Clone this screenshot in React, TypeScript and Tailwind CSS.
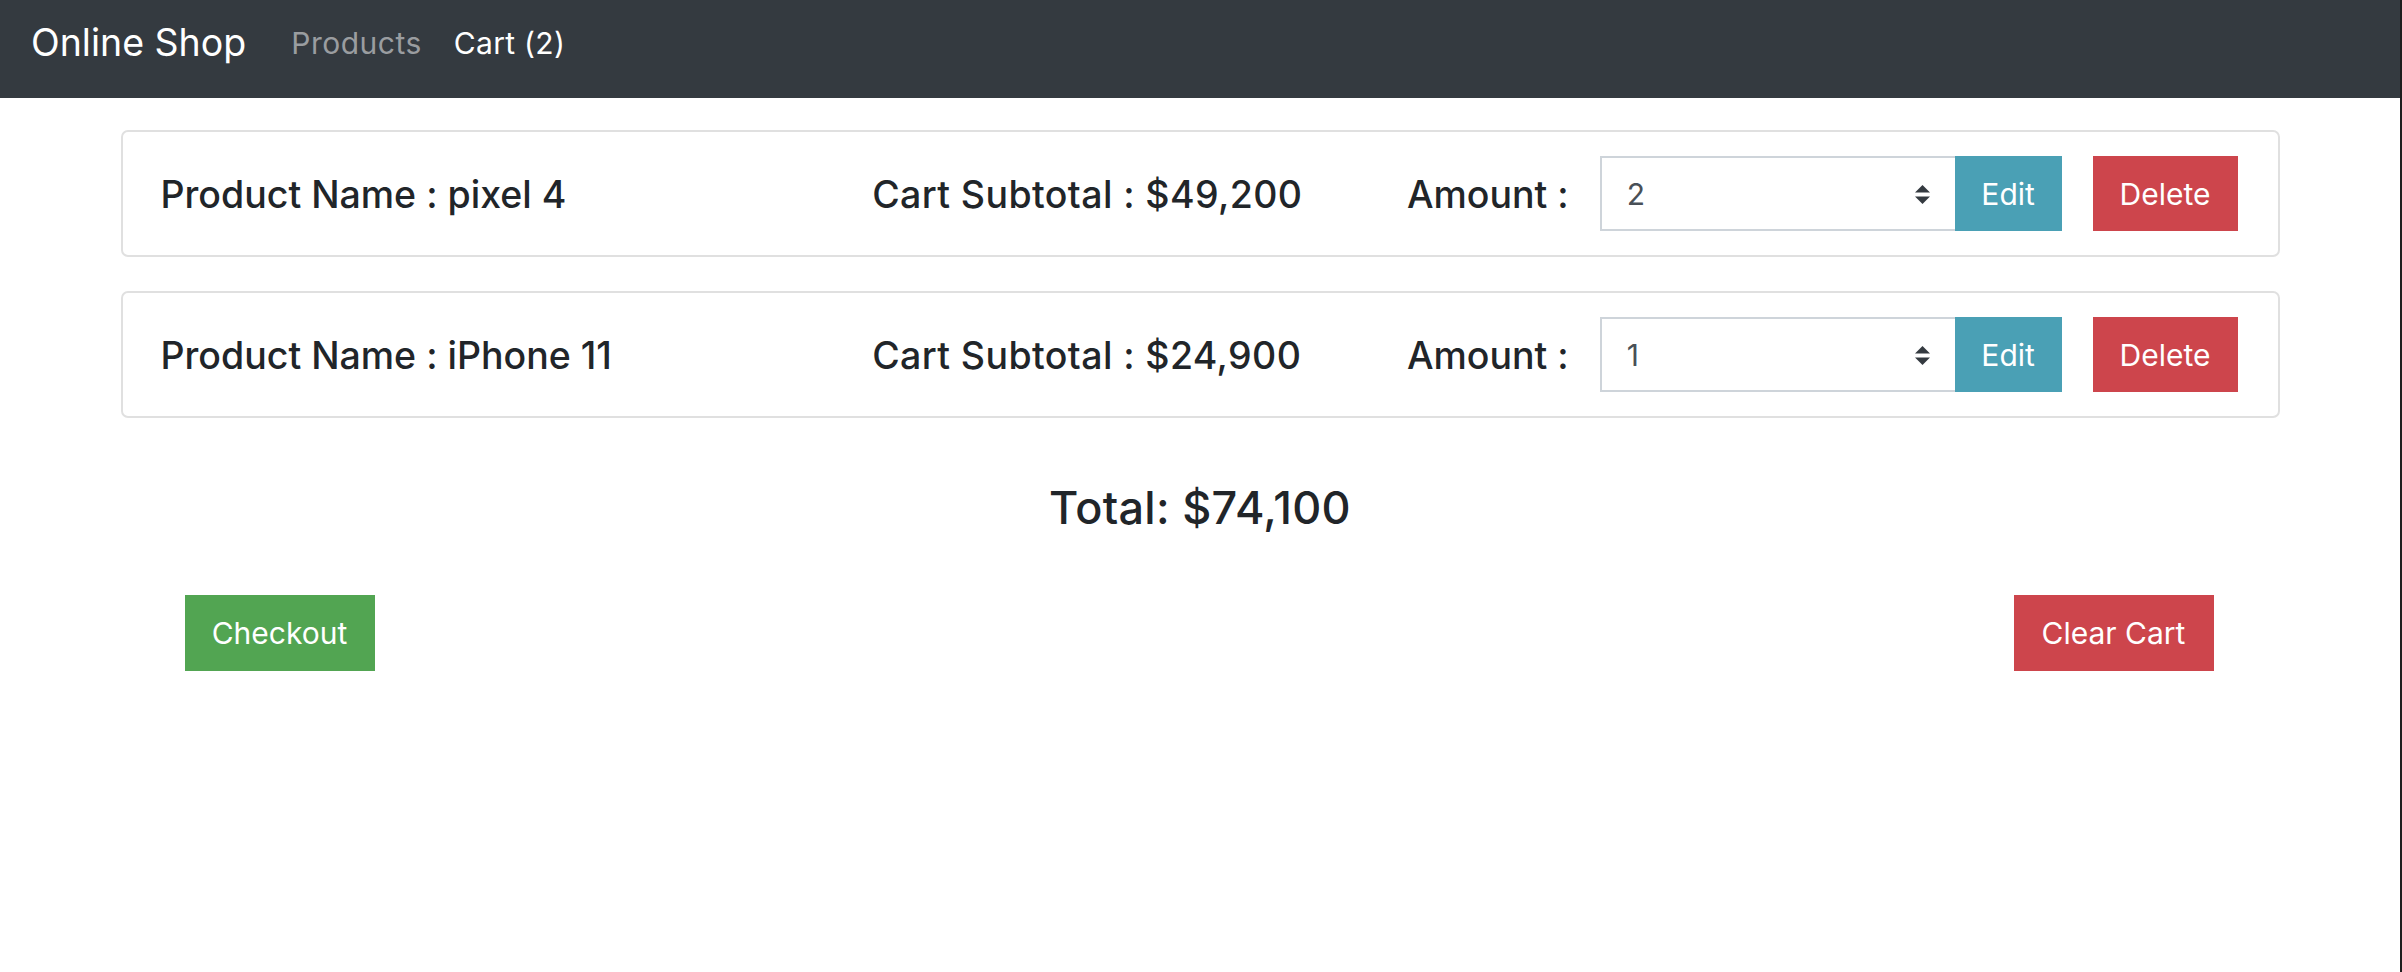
const items = [
  { name: "pixel 4", subtotal: "$49,200", amount: 2 },
  { name: "iPhone 11", subtotal: "$24,900", amount: 1 },
];

const SortArrows = () => (
  <svg width="17" height="19" viewBox="0 0 17 19" className="shrink-0">
    <path d="M8.5 0 L16 7.5 H1 Z" fill="#343a40" />
    <path d="M8.5 19 L16 11.5 H1 Z" fill="#343a40" />
  </svg>
);

const CartRow = ({
  name,
  subtotal,
  amount,
}: {
  name: string;
  subtotal: string;
  amount: number;
}) => (
  <div className="flex h-[127px] items-center rounded-[7px] border-2 border-[#e0e0e0] pl-[38px] pr-[40px]">
    <h5 className="w-[712px] pt-[3px] text-[37.5px] font-medium">Product Name : {name}</h5>
    <h5 className="w-[535px] pt-[3px] text-[37.5px] font-medium tracking-[0.4px]">
      Cart Subtotal : {subtotal}
    </h5>
    <h5 className="w-[193px] pt-[3px] text-[37.5px] font-medium">Amount :</h5>
    <div className="flex h-[75px] w-[355px] items-center justify-between border-2 border-r-0 border-[#ced4da] pl-[25px] pr-[24px] pt-[2px] text-[30px] text-[#495057]">
      <span>{amount}</span>
      <SortArrows />
    </div>
    <button className="h-[75px] w-[107px] bg-[#4aa0b5] pt-[2px] text-[30px] text-white">
      Edit
    </button>
    <button className="ml-[31px] h-[75px] w-[145px] bg-[#cd454c] pt-[2px] text-[30px] text-white">
      Delete
    </button>
  </div>
);

export default function App() {
  return (
    <div
      className="flex min-h-screen w-full bg-white text-[#212529]"
      style={{ fontFamily: "Inter, 'Noto Sans', sans-serif" }}
    >
      <div className="flex-1">
        <nav className="flex h-[98px] items-center bg-[#343a40] px-[31px] pb-[12px]">
          <span className="text-[37.5px] text-white">Online Shop</span>
          <span className="ml-[45px] text-[30px] tracking-[0.5px] text-[#9a9da0]">Products</span>
          <span className="ml-[32px] text-[30px] tracking-[0.3px] text-white">Cart (2)</span>
        </nav>

        <main className="mx-auto w-[2159px] pt-[32px]">
          <div className="flex flex-col gap-[34px]">
            {items.map((item) => (
              <CartRow key={item.name} {...item} />
            ))}
          </div>

          <h4 className="mt-[63px] text-center text-[45px] font-medium leading-[54px] tracking-[0.3px]">
            Total: $74,100
          </h4>

          <div className="mt-[60px] flex justify-between pl-[64px] pr-[66px]">
            <button className="h-[76px] w-[190px] bg-[#52a552] text-[30px] text-white">
              Checkout
            </button>
            <button className="h-[76px] w-[200px] bg-[#cd454c] text-[30px] text-white">
              Clear Cart
            </button>
          </div>
        </main>
      </div>
      <div className="w-[2px] bg-[#1e1e1e]" />
    </div>
  );
}
